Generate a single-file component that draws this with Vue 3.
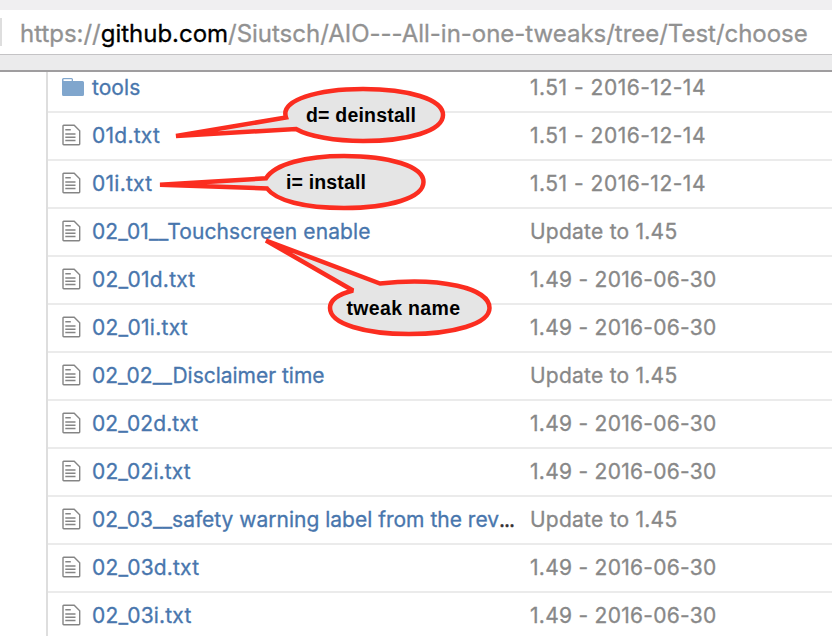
<script setup>
const rows = [
  { name: 'tools', message: '1.51 - 2016-12-14', folder: true, track: 0.05 },
  { name: '01d.txt', message: '1.51 - 2016-12-14', track: 0.25 },
  { name: '01i.txt', message: '1.51 - 2016-12-14', track: 0.25 },
  { name: '02_01__Touchscreen enable', message: 'Update to 1.45', track: 0.11 },
  { name: '02_01d.txt', message: '1.49 - 2016-06-30', track: 0.25 },
  { name: '02_01i.txt', message: '1.49 - 2016-06-30', track: 0.28 },
  { name: '02_02__Disclaimer time', message: 'Update to 1.45', track: -0.02 },
  { name: '02_02d.txt', message: '1.49 - 2016-06-30', track: 0.1 },
  { name: '02_02i.txt', message: '1.49 - 2016-06-30', track: 0.13 },
  { name: '02_03__safety warning label from the rev', message: 'Update to 1.45', cut: true, track: 0 },
  { name: '02_03d.txt', message: '1.49 - 2016-06-30', track: 0.18 },
  { name: '02_03i.txt', message: '1.49 - 2016-06-30', track: 0.18 },
]
const messageTrack = { '1.51': 0.5, '1.49': 0.28, Upda: 0.24 }
const px = (n) => ({ letterSpacing: n + 'px' })
</script>

<template>
  <div class="window">
    <header class="toolbar">
      <div class="address">
        <span class="divider"></span>
        <span class="url">https://<b>github.com</b>/Siutsch/AIO---All-in-one-tweaks/tree/Test/choose</span>
      </div>
    </header>
    <main class="page">
      <div class="files">
        <div v-for="row in rows" :key="row.name" class="row">
          <svg v-if="row.folder" class="icon" width="24" height="24" viewBox="0 0 24 24">
            <path d="M1 3.500Q1 2 2.500 2H10.500Q12 2 12 3.500V5H21.500Q23 5 23 6.500V18.500Q23 20 21.500 20H2.500Q1 20 1 18.500Z" fill="#80a6cd" />
            <path d="M2.500 3.200H10.700V5H2.500Z" fill="#fff" />
          </svg>
          <svg v-else class="icon" width="24" height="24" viewBox="0 0 24 24">
            <path d="M2.700 1.200H13.200L18.700 6.800V20.100Q18.700 20.800 18 20.800H2.700Q2 20.800 2 20.100V1.900Q2 1.200 2.700 1.200Z" fill="#fff" stroke="#858585" stroke-width="1.400" />
            <path d="M4.300 5.700H9.800M4.300 9.900H14.500M4.300 13.200H14.500M4.300 16.500H14.500" fill="none" stroke="#858585" stroke-width="1.500" />
          </svg>
          <span class="name"><a :style="px(row.track)">{{ row.name }}</a><i v-if="row.cut">...</i></span>
          <span class="message" :style="px(messageTrack[row.message.slice(0, 4)])">{{ row.message }}</span>
        </div>
      </div>
    </main>
    <svg class="notes" width="832" height="636" viewBox="0 0 832 636">
      <g fill="#e5e5e5" stroke="#fb2d20" stroke-width="4.500" stroke-miterlimit="2">
        <path d="M176 136L286 117.500C280 100 318 89 363 89C408 89 443 99 443 115C443 131 408 141 363 141C335 141 309 136.500 296 129Z" />
        <path d="M160 184.800L266 178.300C275 164 306 156 344 156C389 156 423.500 166 423.500 182C423.500 198 389 208 344 208C304 208 276 200.500 267 188.500Z" />
        <path d="M266 240.500L380 283.500C440 277 489.500 288 489.500 308C489.500 324 453 334 409 334C365 334 330 324 330 308C330 300 339 294 353 290.500Z" />
      </g>
      <g class="labels">
        <text x="306" y="122" textLength="110">d= deinstall</text>
        <text x="286" y="189" textLength="80">i= install</text>
        <text x="346.500" y="315" textLength="113.500">tweak name</text>
      </g>
    </svg>
  </div>
</template>

<style>
body { margin: 0; background: #fff; }
</style>

<style scoped>
.window {
  position: relative;
  width: 832px;
  height: 636px;
  overflow: hidden;
  background: #fff;
  font-family: Inter, "Liberation Sans", sans-serif;
  display: flex;
  flex-direction: column;
}
.toolbar {
  box-sizing: border-box;
  flex: none;
  height: 72px;
  padding-top: 10px;
  background: linear-gradient(#f0eff1 10px, #ebebec 10px);
  border-bottom: 2px solid #9f9d9f;
}
.address {
  display: flex;
  align-items: center;
  height: 44px;
  background: #fff;
  border-bottom: 1px solid #c4c3c5;
}
.divider { width: 2px; height: 28px; background: #dedede; }
.url {
  margin-left: 18px;
  padding-top: 4px;
  white-space: pre;
  font-size: 24px;
  line-height: 40px;
  letter-spacing: -0.02px;
  color: #929292;
  -webkit-text-stroke: 0.3px;
}
.url b { font-weight: 400; color: #000; }
.page { flex: 1; min-height: 0; overflow: hidden; padding-left: 46px; }
.files { border-left: 2px solid #dedede; margin-top: -9px; }
.row {
  box-sizing: border-box;
  height: 48px;
  display: flex;
  align-items: center;
  border-bottom: 2px solid #ebebeb;
  padding-left: 13px;
  font-size: 21px;
  line-height: 46px;
  white-space: pre;
  -webkit-text-stroke: 0.3px;
}
.row:first-child { height: 50px; padding-top: 2px; }
.icon { flex: none; margin-right: 7px; }
.name { width: 438px; flex: none; color: #4876ad; }
.name i { font-style: normal; color: #333; letter-spacing: -1.1px; }
.message { color: #888; }
.notes { position: absolute; left: 0; top: 0; }
.labels { font: bold 19.500px "Liberation Sans", sans-serif; fill: #000; }
</style>
